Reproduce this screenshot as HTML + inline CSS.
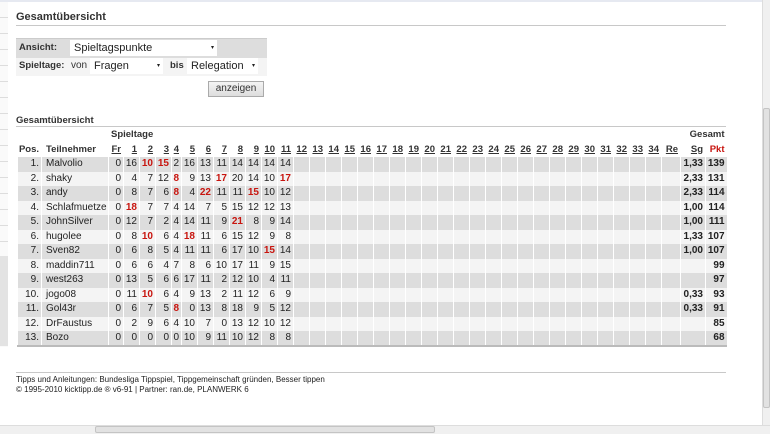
<!DOCTYPE html>
<html><head><meta charset="utf-8"><style>
*{margin:0;padding:0;box-sizing:border-box}
body{width:770px;height:434px;overflow:hidden;background:#fff;font-family:"Liberation Sans",Arial,sans-serif;color:#222;position:relative}
.a{position:absolute}
.h1{left:16px;top:11px;font-size:11px;font-weight:bold;color:#333}
.ln{height:1px;background:#c8c8c8}
.sel{position:absolute;background:#fff;font-size:11px;padding:1px 4px;line-height:14px;height:16px}
.sel:after{content:"▾";position:absolute;right:3px;top:1px;font-size:6px}
.lb{position:absolute;font-size:9.5px;font-weight:bold;color:#333}
table{border-collapse:collapse;table-layout:fixed;font-size:10px}
td,th{height:14.5px;line-height:14px;padding:0 2px 0 0;text-align:right;white-space:nowrap;overflow:hidden;border-left:1px solid #fff}
th{font-weight:bold;color:#333;font-size:9.5px}
th.u{text-decoration:underline}
tr.o td{background:#ddd}
tr.e td{background:#f4f4f4}
.r{color:#c8150f;font-weight:bold}
td.n{text-align:left;padding-left:4px}
td.p{font-weight:bold}
</style></head><body>
<div class="a" style="left:0;top:0;width:770px;height:2px;background:#e6e9f1"></div>
<div class="a" style="left:0;top:2px;width:8px;height:345px;background:repeating-linear-gradient(#fafafa 0 15px,#ddd 15px 16px)"></div>
<div class="a" style="left:0;top:256px;width:8px;height:90px;background:#e3e3e3"></div>
<div class="a h1">Gesamtübersicht</div>
<div class="a ln" style="left:16px;top:25px;width:710px"></div>
<div class="a" style="left:16px;top:38px;width:251px;height:38px;border-top:1px solid #ccc;border-bottom:1px solid #ccc">
 <div class="a" style="left:0;top:0;width:251px;height:19px;background:#ddd"></div>
 <div class="a" style="left:0;top:19px;width:251px;height:18px;background:#f4f4f4"></div>
 <div class="lb" style="left:3px;top:3px">Ansicht:</div>
 <div class="lb" style="left:3px;top:21px">Spieltage:</div>
 <div class="sel" style="left:54px;top:1px;width:147px">Spieltagspunkte</div>
 <div class="lb" style="left:55px;top:21px;font-weight:normal;font-size:10px">von</div>
 <div class="sel" style="left:74px;top:19px;width:73px">Fragen</div>
 <div class="lb" style="left:154px;top:21px">bis</div>
 <div class="sel" style="left:171px;top:19px;width:71px">Relegation</div>
</div>
<div class="a" style="left:208px;top:81px;width:56px;height:16px;background:linear-gradient(#f4f4f4,#ddd);border:1px solid #aaa;font-size:10px;text-align:center;line-height:14px;color:#333">anzeigen</div>
<div class="a" style="left:16px;top:115px;font-size:9.5px;font-weight:bold;color:#333">Gesamtübersicht</div>
<div class="a ln" style="left:16px;top:126px;width:710px"></div>
<div class="a" style="left:17px;top:128px">
<table id="t" style="width:709px;border-bottom:2px solid #bbb"></table>
</div>
<script>
var w=[24,67,15,16,16,16,10];for(var i=5;i<=34;i++)w.push(16);w.push(19,25,21);
var h='<colgroup>'+w.map(function(x){return '<col style="width:'+x+'px">'}).join('')+'</colgroup>';
h+='<tr><th></th><th></th><th colspan="8" style="text-align:left;padding-left:2px">Spieltage</th>';
for(i=0;i<28;i++)h+='<th></th>';h+='<th colspan="2" style="text-align:right">Gesamt</th></tr>';
h+='<tr><th>Pos.</th><th style="text-align:left;padding-left:4px">Teilnehmer</th><th class="u">Fr</th>';
for(i=1;i<=34;i++)h+='<th class="u">'+i+'</th>';h+='<th class="u">Re</th><th class="u">Sg</th><th style="color:#c8150f">Pkt</th></tr>';
var d=[["Malvolio","0 16 10r 15r 2 16 13 11 14 14 14 14","1,33",139],
["shaky","0 4 7 12 8r 9 13 17r 20 14 10 17r","2,33",131],
["andy","0 8 7 6 8r 4 22r 11 11 15r 10 12","2,33",114],
["Schlafmuetze","0 18r 7 7 4 14 7 5 15 12 12 13","1,00",114],
["JohnSilver","0 12 7 2 4 14 11 9 21r 8 9 14","1,00",111],
["hugolee","0 8 10r 6 4 18r 11 6 15 12 9 8","1,33",107],
["Sven82","0 6 8 5 4 11 11 6 17 10 15r 14","1,00",107],
["maddin711","0 6 6 4 7 8 6 10 17 11 9 15","",99],
["west263","0 13 5 6 6 17 11 2 12 10 4 11","",97],
["jogo08","0 11 10r 6 4 9 13 2 11 12 6 9","0,33",93],
["Gol43r","0 6 7 5 8r 0 13 8 18 9 5 12","0,33",91],
["DrFaustus","0 2 9 6 4 10 7 0 13 12 10 12","",85],
["Bozo","0 0 0 0 0 10 9 11 10 12 8 8","",68]];
d.forEach(function(r,k){h+='<tr class="'+(k%2?'e':'o')+'"><td>'+(k+1)+'.</td><td class="n">'+r[0]+'</td>';
r[1].split(' ').forEach(function(v){h+=v.slice(-1)=='r'?'<td class="r">'+v.slice(0,-1)+'</td>':'<td>'+v+'</td>'});
for(i=0;i<24;i++)h+='<td></td>';h+='<td class="p">'+r[2]+'</td><td class="p">'+r[3]+'</td></tr>'});
document.getElementById('t').innerHTML=h;
</script>
<div class="a ln" style="left:16px;top:372px;width:710px"></div>
<div class="a" style="left:16px;top:375px;font-size:8px;line-height:10px;color:#222">Tipps und Anleitungen: Bundesliga Tippspiel, Tippgemeinschaft gründen, Besser tippen<br>© 1995-2010 kicktipp.de ® v6-91 | Partner: ran.de, PLANWERK 6</div>
<div class="a" style="left:762px;top:0;width:8px;height:425px;background:#f0f0f0;border-left:1px solid #ddd"></div>
<div class="a" style="left:763px;top:108px;width:7px;height:300px;background:#e2e2e2;border:1px solid #c4c4c4;border-radius:2px"></div>
<div class="a" style="left:0;top:425px;width:770px;height:9px;background:#f0f0f0;border-top:1px solid #ddd"></div>
<div class="a" style="left:95px;top:426px;width:340px;height:7px;background:#e2e2e2;border:1px solid #c4c4c4;border-radius:2px"></div>
</body></html>
